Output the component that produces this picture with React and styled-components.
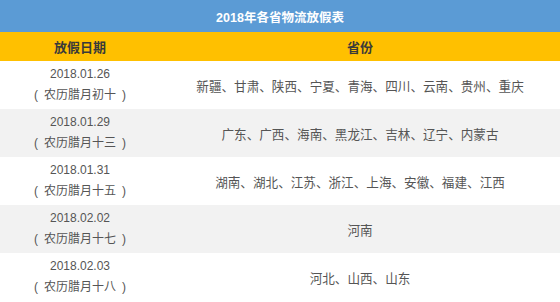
import React from 'react';
import styled, { createGlobalStyle } from 'styled-components';

const GlobalStyle = createGlobalStyle`
  html, body {
    margin: 0;
    padding: 0;
    background: #fff;
  }
  body {
    font-family: "Liberation Sans", Arial, "Noto Sans CJK SC", sans-serif;
  }
`;

const Table = styled.div`
  width: 560px;
  display: flex;
  flex-direction: column;
`;

const Title = styled.div`
  height: 32px;
  background: #5b9bd5;
  color: #fff;
  font-weight: bold;
  font-size: 12.5px;
  display: flex;
  align-items: center;
  justify-content: center;
`;

const Grid = styled.div`
  display: grid;
  grid-template-columns: 160px 1fr;
  align-items: center;
  text-align: center;
  height: ${(p) => p.$height}px;
  background: ${(p) => p.$bg};
`;

const HeadCell = styled.div`
  font-size: 13px;
  font-weight: bold;
  color: #3a3a3a;
`;

const DateCell = styled.div`
  font-size: 12px;
  line-height: 21px;
  color: #555;
`;

const Paren = styled.span`
  display: inline-block;
  margin: 0 ${(p) => (p.$side === 'left' ? '6px 0 0' : '0 0 6px')};
`;

const ProvinceCell = styled.div`
  font-size: 12.6px;
  color: #555;
`;

const rows = [
  ['2018.01.26', '农历腊月初十', '新疆、甘肃、陕西、宁夏、青海、四川、云南、贵州、重庆'],
  ['2018.01.29', '农历腊月十三', '广东、广西、海南、黑龙江、吉林、辽宁、内蒙古'],
  ['2018.01.31', '农历腊月十五', '湖南、湖北、江苏、浙江、上海、安徽、福建、江西'],
  ['2018.02.02', '农历腊月十七', '河南'],
  ['2018.02.03', '农历腊月十八', '河北、山西、山东'],
];

export default function App() {
  return (
    <>
      <GlobalStyle />
      <Table>
        <Title>2018年各省物流放假表</Title>
        <Grid $height={29} $bg="#ffc000">
          <HeadCell>放假日期</HeadCell>
          <HeadCell>省份</HeadCell>
        </Grid>
        {rows.map(([date, lunar, provinces], i) => (
          <Grid key={i} $height={48} $bg={i % 2 ? '#f2f2f2' : '#fff'}>
            <DateCell>
              {date}
              <br />
              <Paren $side="left">(</Paren>
              {lunar}
              <Paren $side="right">)</Paren>
            </DateCell>
            <ProvinceCell>{provinces}</ProvinceCell>
          </Grid>
        ))}
      </Table>
    </>
  );
}
